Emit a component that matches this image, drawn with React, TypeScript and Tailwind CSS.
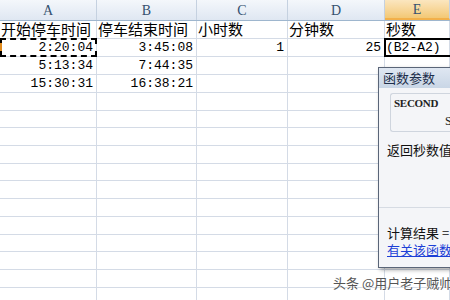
const cjk = "font-['SimSun','Noto_Sans_CJK_SC',sans-serif]";
const num = "font-['Liberation_Mono','Noto_Sans_CJK_SC',monospace]";

const cols = [
  { key: "A", w: "w-[97px]" },
  { key: "B", w: "w-[100px]" },
  { key: "C", w: "w-[91px]" },
  { key: "D", w: "w-[97px]" },
  { key: "E", w: "flex-1" },
];

const data: string[][] = [
  ["开始停车时间", "停车结束时间", "小时数", "分钟数", "秒数"],
  ["2:20:04", "3:45:08", "1", "25", "(B2-A2)"],
  ["5:13:34", "7:44:35", "", "", ""],
  ["15:30:31", "16:38:21", "", "", ""],
];

function Cell({ w, children, right, head }: { w: string; children?: React.ReactNode; right?: boolean; head?: boolean }) {
  return (
    <div
      className={`${w} shrink-0 h-full border-r border-[#d4dbe6] flex items-center overflow-visible whitespace-nowrap ${
        right ? "justify-end pr-[3px]" : "pl-[1px]"
      } ${head ? cjk + " text-[15px] text-black" : num + " text-[13px] text-black"}`}
    >
      {children}
    </div>
  );
}

export default function App() {
  const empty = Array.from({ length: 12 });
  return (
    <div className="relative w-[450px] h-[300px] overflow-hidden bg-white">
      {/* column headers */}
      <div className="flex h-[21px] border-b border-[#9eb6ce]">
        {cols.map((c) => (
          <div
            key={c.key}
            className={`${c.w} shrink-0 h-full flex items-center justify-center border-r border-[#c5d1e0] font-['Liberation_Serif',serif] text-[14px] text-[#34506f] ${
              c.key === "E"
                ? "bg-gradient-to-b from-[#fbe6bf] to-[#f3c874] border-b-2 border-b-[#f2b04a]"
                : "bg-gradient-to-b from-[#f4f7fb] to-[#dfe7f2]"
            }`}
          >
            {c.key}
          </div>
        ))}
      </div>

      {/* data rows */}
      {data.map((row, i) => (
        <div key={i} className="relative flex h-[18px] border-b border-[#d4dbe6]">
          {row.map((v, j) => (
            <Cell key={j} w={cols[j].w} head={i === 0} right={i > 0 && j < 4}>
              {v}
            </Cell>
          ))}
          {i === 1 && (
            <>
              <div className="absolute left-0 top-[-1px] w-[97px] h-[19px] border-2 border-dashed border-black pointer-events-none" />
              <div className="absolute left-0 top-[4px] w-[2px] h-[8px] bg-[#e08a1c]" />
              <div className="absolute left-[384px] top-[-1px] w-[70px] h-[19px] border-2 border-black pointer-events-none" />
            </>
          )}
        </div>
      ))}
      {empty.map((_, i) => (
        <div key={"e" + i} className="flex h-[17.7px] border-b border-[#d4dbe6]">
          {cols.map((c) => (
            <Cell key={c.key} w={c.w} />
          ))}
        </div>
      ))}

      {/* function arguments dialog */}
      <div className="absolute left-[378px] top-[67px] w-[90px] h-[201px] overflow-hidden border border-[#5a6578] bg-[#eef1f6] shadow-[2px_2px_4px_rgba(0,0,0,0.35)] flex flex-col">
        <div className={`h-[20px] shrink-0 flex items-center pl-[4px] bg-gradient-to-b from-[#dfe7f2] to-[#c9d6e6] text-[13px] text-[#1d2e4a] ${cjk}`}>
          函数参数
        </div>
        <div className="flex-1 bg-[#f4f5f8] flex flex-col pl-[8px]">
          <div className="mt-[5px] ml-[3px] h-[39px] shrink-0 border border-[#cfd5de] border-r-0 rounded-l-[3px] flex flex-col pl-[3px]">
            <div className="mt-[3px] font-['Liberation_Serif',serif] font-bold text-[11px] leading-[13px] tracking-tight text-[#222]">SECOND</div>
            <div className="mt-[4px] pl-[51px] font-['Liberation_Serif',serif] text-[12px] leading-[14px] text-[#222]">S</div>
          </div>
          <div className={`mt-[10px] text-[13px] leading-[16px] text-[#111] whitespace-nowrap ${cjk}`}>返回秒数值，</div>
          <div className="mt-[49px] h-[1px] shrink-0 bg-[#d6dbe3] -ml-[8px]" />
          <div className={`mt-[17px] text-[13px] leading-[16px] text-[#111] whitespace-nowrap ${cjk}`}>计算结果 =</div>
          <div className={`mt-[1px] text-[13px] leading-[16px] text-[#1c3fd6] underline whitespace-nowrap ${cjk}`}>有关该函数的</div>
        </div>
      </div>

      {/* watermark */}
      <div
        className={`absolute left-[333px] top-[273px] text-[13px] text-[#555] whitespace-nowrap ${cjk} [text-shadow:0_0_2px_#fff,0_0_2px_#fff]`}
      >
        头条 @用户老子贼帅
      </div>
    </div>
  );
}
